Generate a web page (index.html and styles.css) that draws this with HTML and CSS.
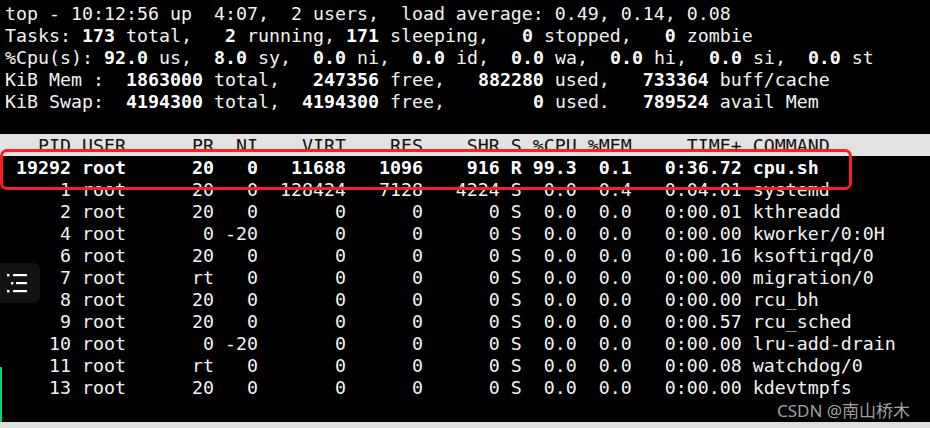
FILE: index.html
```html
<!DOCTYPE html>
<html lang="zh-CN">
<head>
<meta charset="utf-8">
<title>top</title>
<link rel="stylesheet" href="styles.css">
</head>
<body>
<div class="screen">
  <div class="term">
    <div class="ln">top - 10:12:56 up  4:07,  2 users,  load average: 0.49, 0.14, 0.08</div>
    <div class="ln">Tasks: <b>173</b> total,   <b>2</b> running, <b>171</b> sleeping,   <b>0</b> stopped,   <b>0</b> zombie</div>
    <div class="ln">%Cpu(s): <b>92.0</b> us,  <b>8.0</b> sy,  <b>0.0</b> ni,  <b>0.0</b> id,  <b>0.0</b> wa,  <b>0.0</b> hi,  <b>0.0</b> si,  <b>0.0</b> st</div>
    <div class="ln">KiB Mem :  <b>1863000</b> total,   <b>247356</b> free,   <b>882280</b> used,   <b>733364</b> buff/cache</div>
    <div class="ln">KiB Swap:  <b>4194300</b> total,  <b>4194300</b> free,        <b>0</b> used.   <b>789524</b> avail Mem</div>
    <div class="ln"> </div>
    <div class="ln head">   PID USER      PR  NI    VIRT    RES    SHR S %CPU %MEM     TIME+ COMMAND</div>
    <div class="ln hot"> 19292 root      20   0   11688   1096    916 R 99.3  0.1   0:36.72 cpu.sh</div>
    <div class="ln">     1 root      20   0  128424   7128   4224 S  0.0  0.4   0:04.01 systemd</div>
    <div class="ln">     2 root      20   0       0      0      0 S  0.0  0.0   0:00.01 kthreadd</div>
    <div class="ln">     4 root       0 -20       0      0      0 S  0.0  0.0   0:00.00 kworker/0:0H</div>
    <div class="ln">     6 root      20   0       0      0      0 S  0.0  0.0   0:00.16 ksoftirqd/0</div>
    <div class="ln">     7 root      rt   0       0      0      0 S  0.0  0.0   0:00.00 migration/0</div>
    <div class="ln">     8 root      20   0       0      0      0 S  0.0  0.0   0:00.00 rcu_bh</div>
    <div class="ln">     9 root      20   0       0      0      0 S  0.0  0.0   0:00.57 rcu_sched</div>
    <div class="ln">    10 root       0 -20       0      0      0 S  0.0  0.0   0:00.00 lru-add-drain</div>
    <div class="ln">    11 root      rt   0       0      0      0 S  0.0  0.0   0:00.08 watchdog/0</div>
    <div class="ln">    13 root      20   0       0      0      0 S  0.0  0.0   0:00.00 kdevtmpfs</div>
  </div>
  <div class="bottom-bar"></div>

  <div class="highlight-box"></div>
  <div class="green-edge"></div>
  <div class="toc-btn">
    <svg width="40" height="40" viewBox="0 0 40 40" aria-hidden="true">
      <rect x="7" y="15" width="2.4" height="2.4" fill="#fff"/>
      <rect x="13" y="15" width="14" height="2.2" fill="#fff"/>
      <rect x="11" y="23" width="2.4" height="2.4" fill="#fff"/>
      <rect x="16" y="23" width="11" height="2.2" fill="#fff"/>
      <rect x="7" y="31" width="2.4" height="2.4" fill="#fff"/>
      <rect x="13" y="31" width="14" height="2.2" fill="#fff"/>
    </svg>
  </div>
  <div class="watermark">CSDN @南山桥木</div>
</div>
</body>
</html>
```
FILE: styles.css
```css
* { box-sizing: border-box; }
html, body { margin: 0; padding: 0; background: #000; }
.screen {
  position: relative;
  width: 930px;
  height: 428px;
  background: #000;
  overflow: hidden;
  display: flex;
  flex-direction: column;
}
.term {
  flex: 1;
  padding-top: 2px;
  font-family: "DejaVu Sans Mono", "Liberation Mono", monospace;
  font-size: 18.27px;
  line-height: 22px;
  color: #f2f2f2;
}
.ln {
  white-space: pre;
  height: 22px;
  padding-left: 5px;
  padding-top: 1px;
}
.ln b { font-weight: bold; color: #fff; }
.head {
  background: #e2e2e2;
  color: #111;
}
.hot { font-weight: bold; color: #fff; }
.bottom-bar {
  height: 6px;
  background: #dedede;
}
.highlight-box {
  position: absolute;
  left: 0;
  top: 149px;
  width: 852px;
  height: 41px;
  border: 3px solid #ff1e1e;
  border-radius: 7px;
}
.green-edge {
  position: absolute;
  left: 0;
  top: 367px;
  width: 2px;
  height: 55px;
  background: #00d66b;
}
.toc-btn {
  position: absolute;
  left: 0;
  top: 263px;
  width: 40px;
  height: 40px;
  background: #111214;
  border-radius: 0 7px 7px 0;
}
.toc-btn svg { display: block; margin-top: -4px; }
.watermark {
  position: absolute;
  left: 777px;
  top: 400px;
  font-family: "Noto Sans", "Noto Sans CJK SC", sans-serif;
  font-size: 17px;
  line-height: 22px;
  color: #a0a0a0;
}
```
